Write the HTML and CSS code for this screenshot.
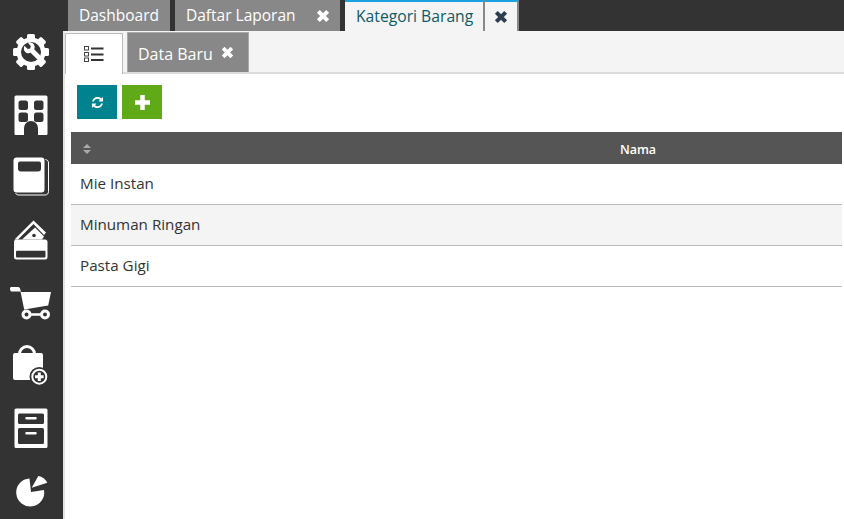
FILE: index.html
```html
<!DOCTYPE html>
<html lang="id">
<head>
<meta charset="utf-8">
<title>Kategori Barang</title>
<link rel="stylesheet" href="styles.css">
</head>
<body>
<div class="app">
  <aside class="rail">
    <svg class="ico" viewBox="0 0 40 40"><g fill="#fff"><circle cx="20" cy="20" r="14.500"/><rect x="16" y="2" width="8" height="36" rx="1.500"/><rect x="16" y="2" width="8" height="36" rx="1.500" transform="rotate(45 20 20)"/><rect x="16" y="2" width="8" height="36" rx="1.500" transform="rotate(90 20 20)"/><rect x="16" y="2" width="8" height="36" rx="1.500" transform="rotate(135 20 20)"/></g><circle cx="20" cy="20" r="10" fill="#333"/><path d="M13.200 13.800l3.600 3.200 2.400-.6.600-2.400-3.200-3.400c3-1 6.400.4 7 3.600.2 1.200 0 2.200-.4 3l6.400 6.600c1 1 1 2.400 0 3.400s-2.400 1-3.400 0l-6.600-6.400c-.8.4-1.800.6-3 .4-3.200-.6-4.400-3.800-3.400-7z" fill="#fff"/></svg>
    <svg class="ico" viewBox="0 0 40 40"><path fill="#fff" fill-rule="evenodd" d="M5 .5h30a1.500 1.500 0 0 1 1.500 1.500v37a1 1 0 0 1-1 1H27V33a6 6 0 0 0-14 0v7H4.500a1 1 0 0 1-1-1V2A1.500 1.500 0 0 1 5 .5zM10 5.500a2.500 2.500 0 0 0-2.500 2.500v4.500A2.500 2.500 0 0 0 10 15h4.500a2.500 2.500 0 0 0 2.500-2.500V8a2.500 2.500 0 0 0-2.500-2.500zM25.500 5.500A2.500 2.500 0 0 0 23 8v4.500a2.500 2.500 0 0 0 2.500 2.500H30a2.500 2.500 0 0 0 2.500-2.500V8A2.500 2.500 0 0 0 30 5.500zM10 17.500A2.500 2.500 0 0 0 7.500 20v4.500A2.500 2.500 0 0 0 10 27h4.500a2.500 2.500 0 0 0 2.500-2.500V20a2.500 2.500 0 0 0-2.500-2.500zM25.500 17.500A2.500 2.500 0 0 0 23 20v4.500a2.500 2.500 0 0 0 2.500 2.500H30a2.500 2.500 0 0 0 2.500-2.500V20a2.500 2.500 0 0 0-2.500-2.500z"/></svg>
    <svg class="ico" viewBox="0 0 40 40"><path d="M34.500 2.500c2 .4 3 1.600 3 3.500v28.500c0 2-1.200 3.500-3.500 3.500H8c-1.800 0-3-.8-3.500-2" fill="none" stroke="#fff" stroke-width="1"/><path fill="#fff" fill-rule="evenodd" d="M5.500 .5h25a3 3 0 0 1 3 3v29a3 3 0 0 1-3 3h-25a3 3 0 0 1-3-3v-29a3 3 0 0 1 3-3zM9 4.500a2 2 0 0 0-2 2v5a3 3 0 0 0 3 3h17a3 3 0 0 0 3-3v-5a2 2 0 0 0-2-2z"/></svg>
    <svg class="ico" viewBox="0 0 40 40"><path fill="#fff" d="M3.500 19.500L22.500 .5 35 12.500 33 15 22.500 4 7 19.500z"/><path fill="#fff" d="M11 19.500L24 7.500 33 16.500 31 19.500z"/><circle cx="23" cy="15.500" r="1.800" fill="#333"/><rect x="3" y="19.500" width="33.500" height="20" rx="2.500" fill="#fff"/><rect x="5" y="30.700" width="29.500" height="6.800" fill="#333" rx="1"/></svg>
    <svg class="ico" viewBox="0 0 40 40"><path fill="#fff" d="M-1 5.500C-1 4.500-.5 4 .5 4H7c1 0 1.500.5 2 1.500L10 9h30l-2.800 13.500-24 4L9.500 8.500H.5C-.5 8.500-1 7-1 5.500z"/><path fill="none" stroke="#fff" stroke-width="2.500" d="M15.500 31.500h18"/><circle cx="15.500" cy="31.500" r="3.500" fill="#333" stroke="#fff" stroke-width="3"/><circle cx="34" cy="31.500" r="3.500" fill="#333" stroke="#fff" stroke-width="3"/></svg>
    <svg class="ico" viewBox="0 0 40 40"><path fill="#fff" d="M4 8h26a2 2 0 0 1 2 2v23a2 2 0 0 1-2 2H4a2 2 0 0 1-2-2V10a2 2 0 0 1 2-2z"/><path fill="none" stroke="#fff" stroke-width="3" d="M8.500 10V9a7.500 7.500 0 0 1 15 0v1"/><circle cx="28.300" cy="31.700" r="9.800" fill="#333"/><circle cx="28.300" cy="31.700" r="7" fill="#333" stroke="#fff" stroke-width="2"/><path fill="none" stroke="#fff" stroke-width="3" d="M24 31.700h8.600M28.300 27.400V36"/></svg>
    <svg class="ico" viewBox="0 0 40 40"><path fill="#fff" fill-rule="evenodd" d="M5 .5h30A1.500 1.500 0 0 1 36.500 2v36.500A1.500 1.500 0 0 1 35 40H5a1.500 1.500 0 0 1-1.500-1.500V2A1.500 1.500 0 0 1 5 .5zM8.500 5.500A1.500 1.500 0 0 0 7 7v7.500A1.500 1.500 0 0 0 8.500 16h23a1.500 1.500 0 0 0 1.500-1.500V7a1.500 1.500 0 0 0-1.500-1.500zM8.500 20A1.500 1.500 0 0 0 7 21.500v13A1.500 1.500 0 0 0 8.500 36h23a1.500 1.500 0 0 0 1.500-1.500v-13a1.500 1.500 0 0 0-1.500-1.500zM15.500 9h9a1.200 1.200 0 0 1 0 2.500h-9a1.200 1.200 0 0 1 0-2.500zM15.500 24h9a1.200 1.200 0 0 1 0 2.500h-9a1.200 1.200 0 0 1 0-2.500z"/></svg>
    <svg class="ico" viewBox="0 0 40 40"><path fill="#fff" d="M18.500 7.500L20 21l13-2A14 14 0 1 1 18.500 7.500z"/><path fill="#fff" d="M20.700 16.700L27.300 5A13 13 0 0 1 36.300 11.700z"/></svg>
  </aside>
  <div class="main">
    <nav class="tabs">
      <a class="tab first">Dashboard</a>
      <a class="tab wide">Daftar Laporan<svg class="x" viewBox="0 0 12 12"><path d="M2 2l8 8M10 2l-8 8"/></svg></a>
      <a class="tab current">Kategori Barang</a>
      <a class="tab current closer"><svg class="x dark" viewBox="0 0 12 12"><path d="M2 2l8 8M10 2l-8 8"/></svg></a>
    </nav>
    <div class="page">
      <div class="subtabs">
        <a class="sub active"><svg class="list" viewBox="0 0 20 16"><g fill="none" stroke="#444"><rect x=".5" y=".5" width="4" height="3.500"/><rect x=".5" y="6.500" width="4" height="3.500"/><rect x=".5" y="12" width="4" height="3.500"/></g><g stroke="#333" stroke-width="2"><path d="M7 2.500h12.500M7 8.500h12.500M7 14h12.500"/></g></svg></a>
        <a class="sub">Data Baru<svg class="x small" viewBox="0 0 12 12"><path d="M2 2l8 8M10 2l-8 8"/></svg></a>
      </div>
      <div class="toolbar">
        <button class="btn teal"><svg class="refresh" viewBox="0 0 1792 1792"><path fill="#fff" d="M1639 1056q0 5-1 7-64 268-268 434.500t-478 166.500q-146 0-282.500-55t-243.500-157l-129 129q-19 19-45 19t-45-19-19-45v-448q0-26 19-45t45-19h448q26 0 45 19t19 45-19 45l-137 137q71 66 161 102t187 36q134 0 250-65t186-179q11-17 53-117 8-23 30-23h192q13 0 22.500 9.500t9.500 22.500zm25-800v448q0 26-19 45t-45 19h-448q-26 0-45-19t-19-45 19-45l138-138q-148-137-349-137-134 0-250 65t-186 179q-11 17-53 117-8 23-30 23h-199q-13 0-22.500-9.500t-9.500-22.500v-7q65-268 270-434.500t480-166.500q146 0 284 55.500t245 156.500l130-129q19-19 45-19t45 19 19 45z"/></svg></button>
        <button class="btn green"><svg class="plus" viewBox="0 0 15 15"><path fill="none" stroke="#fff" stroke-width="4.500" d="M0 7.500h15M7.500 0v15"/></svg></button>
      </div>
      <table class="grid">
        <thead>
          <tr>
            <th class="sort"><svg class="sorter" viewBox="0 0 8 10"><path fill="#aaa" d="M4 0l4 4H0zM4 10L0 6h8z"/></svg></th>
            <th class="name">Nama</th>
          </tr>
        </thead>
        <tbody>
          <tr><td colspan="2">Mie Instan</td></tr>
          <tr class="alt"><td colspan="2">Minuman Ringan</td></tr>
          <tr><td colspan="2">Pasta Gigi</td></tr>
        </tbody>
      </table>
    </div>
  </div>
</div>
</body>
</html>
```
FILE: styles.css
```css
* { box-sizing: border-box; }
html, body { margin: 0; height: 100%; overflow: hidden; background: #fff; }
body { font-family: "Open Sans", "Noto Sans", sans-serif; font-size: 14px; color: #333; }
.app { display: flex; width: 844px; height: 519px; }
.rail {
  width: 63px; flex: none; background: #333;
  display: flex; flex-direction: column; align-items: center;
  padding: 32px 1px 0 0; gap: 22.700px;
}
.ico { width: 40px; height: 40px; flex: none; overflow: visible; }
.main { flex: 1; min-width: 0; display: flex; flex-direction: column; }
.tabs { height: 31px; background: #333; display: flex; padding-left: 5px; flex: none; }
.tab {
  height: 31px; background: #888; color: #fff; padding: 0 11px;
  display: flex; align-items: center; font-size: 15.500px; margin-right: 5px;
  line-height: 1;
}
.tab.first { width: 102px; }
.tab.wide { width: 165px; justify-content: space-between; padding-right: 10px; }
.tab.current {
  background: #f4f4f4; color: #0f5a68; border-top: 2px solid #1ba1e2;
  border-right: 2px solid #888; margin-right: 0; width: 140px; white-space: nowrap;
  font-size: 15.700px;
}
.tab.closer { width: 34px; justify-content: center; padding: 0; }
.x { width: 14px; height: 14px; fill: none; stroke: #fff; stroke-width: 3.500; flex: none; }
.x.dark { stroke: #2c3e50; }
.x.small { width: 13px; height: 13px; margin-left: 8px; margin-bottom: 2px; }
.page { flex: 1; min-height: 0; border-left: 2px solid #e4e4e4; display: flex; flex-direction: column; }
.subtabs {
  height: 43px; flex: none; background: #f4f4f4; border-bottom: 2px solid #ddd;
  display: flex; align-items: flex-end; gap: 4px;
}
.sub {
  height: 40px; background: #888; color: #fff; border: 1px solid #aaa; border-bottom: 0;
  display: flex; align-items: center; padding: 2px 10px 0; font-size: 16px; width: 122px;
}
.sub.active {
  width: 58px; height: 41px; margin-bottom: -2px; background: #fff; border-color: #bbb;
  justify-content: center; padding: 0;
}
.list { width: 20px; height: 16px; }
.toolbar { display: flex; gap: 5px; padding: 11px 0 0 12px; flex: none; height: 58px; }
.btn { width: 40px; height: 34px; border: 0; padding: 0; display: flex; align-items: center; justify-content: center; }
.teal { background: #00828f; }
.green { background: #60a917; }
.refresh { width: 13px; height: 13px; }
.plus { width: 15px; height: 15px; }
.grid { border-collapse: separate; border-spacing: 0; width: 771px; margin-left: 6px; table-layout: fixed; }
.grid thead tr { height: 32px; background: #555; color: #fff; }
.grid th { font-size: 12.500px; font-weight: 600; padding: 3px 0 0; }
.sort { width: 363px; text-align: left; }
.sorter { width: 8px; height: 10px; display: block; margin-left: 12px; margin-top: -2px; }
.name { text-align: center; }
.grid td { height: 41px; padding: 0 9px 3px; border-bottom: 1px solid #bbb; font-size: 15.200px; color: #333; }
.alt { background: #f4f4f4; }
```
